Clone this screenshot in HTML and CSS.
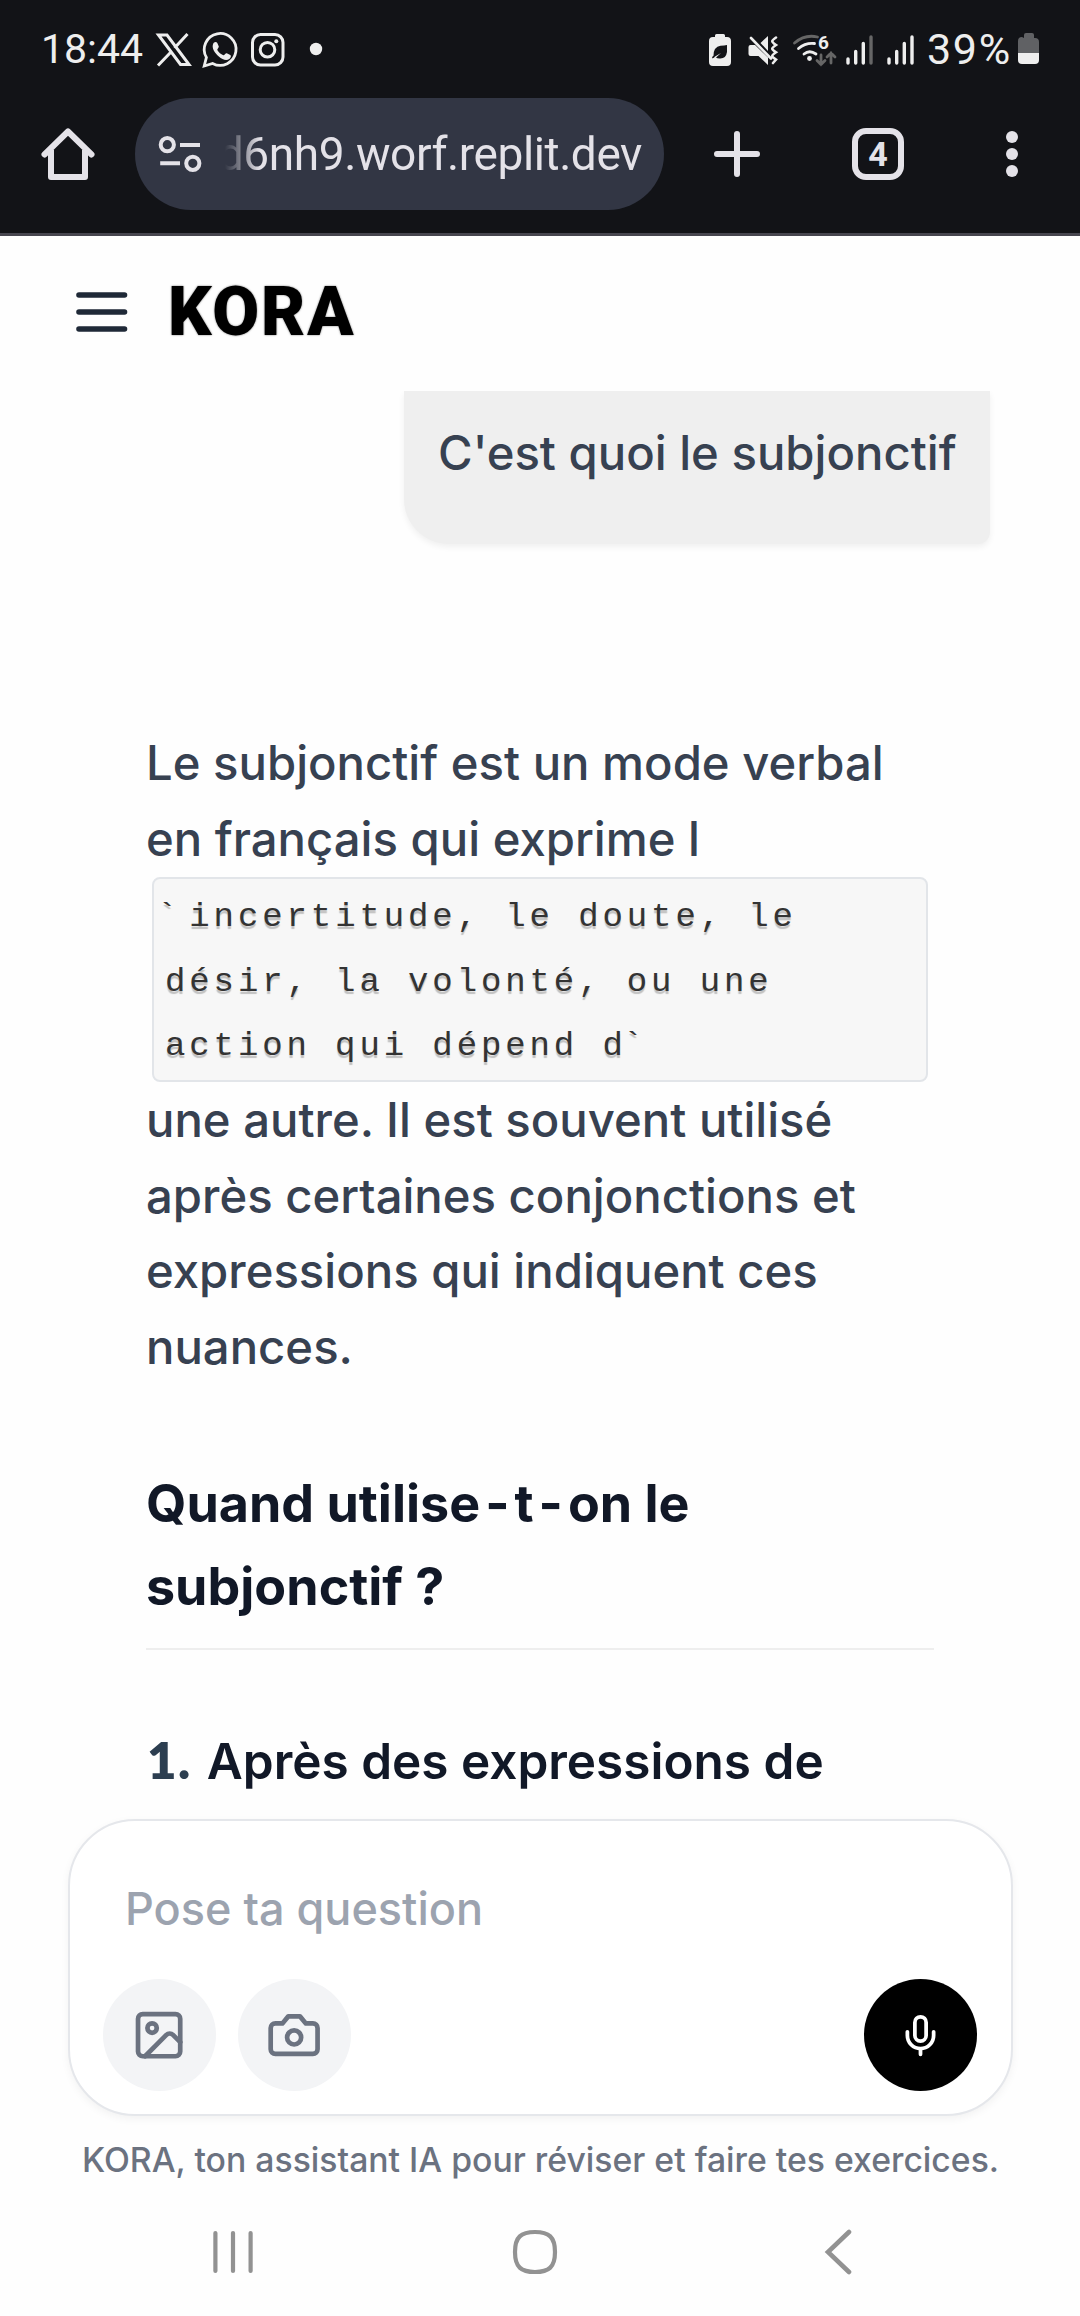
FILE: index.html
```html
<!DOCTYPE html>
<html lang="fr">
<head>
<meta charset="utf-8">
<title>KORA</title>
<link rel="stylesheet" href="styles.css">
</head>
<body>
<div class="chrome">
  <div class="status">
    <span class="clock">18:44</span>
    <svg class="st-apps" width="172" height="40" viewBox="154 29 172 40" fill="none" stroke="#eee">
      <path d="M158.500 35h8.500l22 29.500h-8.500zM187.500 34l-13 14M171 52l-13 13.500" stroke-width="3"/>
      <path d="M204.200 66l2.200-8.600a15.900 15.900 0 1 1 6.200 6z" stroke-width="2.800"/>
      <path d="M213.500 43c1.500-1.500 3-1.500 3.800 0l1.500 3.500c.3 1-1.800 2.500-1.500 3.500 1.500 2.500 3.500 4.300 6 5.200 1.200.2 2.200-2.400 3.500-2l3.500 1.800c1.200.8.500 3-1 4-3 2-7 .5-10.500-2.500-3.500-3-8-8.500-5.300-13.500z" fill="#eee" stroke="none"/>
      <rect x="252.500" y="34.500" width="30.500" height="30.500" rx="8" stroke-width="3"/>
      <circle cx="267.500" cy="49.700" r="7.300" stroke-width="3"/>
      <circle cx="276.300" cy="41.300" r="2" fill="#eee" stroke="none"/>
      <circle cx="316" cy="49" r="6.200" fill="#eee" stroke="none"/>
    </svg>
    <svg class="st-sys" width="212" height="40" viewBox="706 29 212 40" fill="#eee">
      <path d="M715 37v-1.500q0-1.500 1.500-1.500h7q1.500 0 1.500 1.500V37h2q4 0 4 4v21q0 4-4 4h-14q-4 0-4-4V41q0-4 4-4z"/>
      <path d="M727 45v7q-1 7-7.500 6.500-2.500 0-3.500-1l5-4.500-6 3.500q-1 2-3 1.700 0-2 1.500-2.500 0-9 7-10 4-.2 6.500-.7z" fill="#121317"/>
      <path d="M748.500 47q0-2 2-2h4.500l13 12.500V65l-9.500-9h-8q-2 0-2-2zM760.500 43l7.500-7v15z"/>
      <path d="M751 38l20 20.500M776 37.500c-5 3.500-5 4 0 7.500-5 3.500-5 4 0 7.300-5 3.500-5 4 0 7.300l-3 3.400" fill="none" stroke="#eee" stroke-width="2.600" stroke-linecap="round"/>
      <g fill="none" stroke-width="2.800" stroke-linecap="round">
        <path d="M794.500 43q10.500-9 23-6" stroke="#666"/>
        <path d="M798.500 48.500q7-6 16-5M804 54q5.500-4.500 12 0" stroke="#eee"/>
        <path d="M821 55v9.500m-4-4 4 4 4-4M831 63V53m-4 4 4-4 4 4" stroke="#666"/>
      </g>
      <circle cx="809.500" cy="58.500" r="2.400"/>
      <text x="818" y="48.500" class="wifi-gen">6</text>
      <g stroke="#eee" stroke-width="3.400" stroke-linecap="round">
        <path d="M848 59v4M855.700 51.500V63M863.300 43.500V63M889 59v4M896.700 51.500V63M904.300 43.500V63M912 37v26"/>
        <path d="M871 37v26" stroke="#666"/>
      </g>
    </svg>
    <span class="battery-level">39%</span>
    <svg class="st-batt" width="22" height="32" viewBox="0 0 22 32">
      <path d="M6 5V2q0-2 2-2h6q2 0 2 2v3h1q4 0 4 4v12H0V8q0-4 4-4z" fill="#606164"/>
      <path d="M0 20h21v7q0 4-4 4H4q-4 0-4-4z" fill="#eee"/>
    </svg>
  </div>
  <div class="toolbar">
    <svg class="home" width="56" height="56" viewBox="40 126 56 56" fill="none" stroke="#e4e2e8" stroke-width="6" stroke-linejoin="round">
      <path d="M44.500 154.500L68 131.500l23.500 23" stroke-linecap="round"/><path d="M51 150v27h34v-27"/>
    </svg>
    <div class="omnibox">
      <svg width="44" height="38" viewBox="158 135 44 38" fill="none" stroke="#e4e2e8" stroke-width="4">
        <circle cx="167.300" cy="144.700" r="6.600"/><path d="M180 145h20M160.200 163.200H180"/><circle cx="192.800" cy="163.300" r="6.600"/>
      </svg>
      <span class="url">d6nh9.worf.replit.dev</span>
    </div>
    <svg class="plus" width="48" height="48" viewBox="0 0 48 48" stroke="#e4e2e8" stroke-width="6" stroke-linecap="round"><path d="M24 4v40M4 24h40"/></svg>
    <div class="tabs">4</div>
    <svg class="more" width="14" height="48" viewBox="0 0 14 48" fill="#e4e2e8"><circle cx="7" cy="7" r="6"/><circle cx="7" cy="24" r="6"/><circle cx="7" cy="41" r="6"/></svg>
  </div>
</div>

<header class="app-header">
  <svg width="52" height="42" viewBox="0 0 52 42" stroke="#1f2937" stroke-width="5.600" stroke-linecap="round"><path d="M3 4h45.500M3 21h45.500M3 38h45.500"/></svg>
  <h1 class="brand">KORA</h1>
</header>

<main class="chat">
  <div class="bubble">C'est quoi le subjonctif</div>
  <article class="answer">
    <p class="text">Le subjonctif est un mode verbal<br>en français qui exprime l</p>
    <code class="snippet"><span class="tick">`</span>incertitude, le doute, le<br>désir, la volonté, ou une<br>action qui dépend d<span class="tick">`</span></code>
    <p class="text">une autre. Il est souvent utilisé<br>après certaines conjonctions et<br>expressions qui indiquent ces<br>nuances.</p>
    <h2 class="title">Quand utilise<span class="hyphen">-</span>t<span class="hyphen">-</span>on le<br>subjonctif ?</h2>
    <h3 class="subtitle"><span class="num">1.</span><span>Après des expressions de</span></h3>
  </article>
</main>

<footer class="dock">
  <div class="composer">
    <div class="placeholder">Pose ta question</div>
    <div class="actions">
      <div class="round">
        <svg width="56.250" height="56.250" viewBox="0 0 24 24" fill="none" stroke="currentColor" stroke-width="2" stroke-linecap="round" stroke-linejoin="round"><rect x="3" y="3" width="18" height="18" rx="2"/><circle cx="9" cy="9" r="2"/><path d="m21 15-3.086-3.086a2 2 0 0 0-2.828 0L6 21"/></svg>
      </div>
      <div class="round">
        <svg width="56.250" height="56.250" viewBox="0 0 24 24" fill="none" stroke="currentColor" stroke-width="2" stroke-linecap="round" stroke-linejoin="round"><path d="M14.500 4h-5L7 7H4a2 2 0 0 0-2 2v9a2 2 0 0 0 2 2h16a2 2 0 0 0 2-2V9a2 2 0 0 0-2-2h-3l-2.500-3z"/><circle cx="12" cy="13" r="3"/></svg>
      </div>
      <div class="round mic">
        <svg width="45" height="45" viewBox="0 0 24 24" fill="none" stroke="currentColor" stroke-width="2" stroke-linecap="round" stroke-linejoin="round"><path d="M12 2a3 3 0 0 0-3 3v7a3 3 0 0 0 6 0V5a3 3 0 0 0-3-3Z"/><path d="M19 10v2a7 7 0 0 1-14 0v-2M12 19v3"/></svg>
      </div>
    </div>
  </div>
  <p class="note">KORA, ton assistant IA pour réviser et faire tes exercices.</p>
</footer>

<nav class="sysnav">
  <svg width="40" height="46" viewBox="0 0 40 46" fill="none" stroke="#929292" stroke-width="4.200" stroke-linecap="round"><path d="M2.400 4v38M20 4v38M37.600 4v38"/></svg>
  <svg width="46" height="46" viewBox="0 0 46 46" fill="none" stroke="#929292" stroke-width="4.200"><path d="M23 3C37 3 43 8 43 23S37 43 23 43 3 38 3 23 9 3 23 3z"/></svg>
  <svg width="28" height="46" viewBox="0 0 28 46" fill="none" stroke="#929292" stroke-width="4.600" stroke-linecap="round"><path d="M25 3L4 23l21 20"/></svg>
</nav>
</body>
</html>
```
FILE: styles.css
```css
* { box-sizing: border-box; }
body {
  margin: 0;
  width: 1080px;
  height: 2316px;
  overflow: hidden;
  display: flex;
  flex-direction: column;
  background: #fefefe;
  font-family: Inter, "Liberation Sans", sans-serif;
  color: #374151;
}
svg { display: block; flex: none; }
h1, h2, h3, p { margin: 0; }

.chrome {
  height: 236px;
  flex: none;
  background: #121317;
  border-bottom: 3px solid #47464f;
  font-family: Roboto, sans-serif;
  color: #eee;
}
.status {
  height: 98px;
  padding-left: 41px;
  display: flex;
  align-items: center;
  white-space: nowrap;
}
.clock { width: 113px; font-size: 41px; line-height: 40px; }
.st-sys { margin-left: 380px; }
.battery-level { width: 91px; margin-left: 9px; font-size: 43px; line-height: 40px; letter-spacing: 1.700px; }
.wifi-gen { font: 700 19px Roboto, sans-serif; }
.toolbar {
  height: 112px;
  display: flex;
  align-items: center;
  color: #e4e2e8;
}
.home { margin-left: 40px; }
.omnibox {
  width: 529px;
  height: 112px;
  margin-left: 39px;
  padding: 0 22px 0 23px;
  border-radius: 56px;
  background: #323644;
  display: flex;
  align-items: center;
  gap: 16px;
}
.url {
  flex: 1;
  min-width: 0;
  overflow: hidden;
  display: flex;
  justify-content: flex-end;
  white-space: nowrap;
  font-size: 46px;
  line-height: 60px;
  letter-spacing: -.4px;
  -webkit-mask-image: linear-gradient(90deg, transparent 7px, #000 42px);
  mask-image: linear-gradient(90deg, transparent 7px, #000 42px);
}
.plus { margin-left: 49px; }
.tabs {
  width: 52px;
  height: 52px;
  margin-left: 91px;
  border: 6px solid #e4e2e8;
  border-radius: 14px;
  font-size: 34px;
  font-weight: 700;
  line-height: 40px;
  text-align: center;
}
.more { margin-left: 101px; }

.app-header {
  height: 155px;
  flex: none;
  padding: 0 0 3px 76px;
  display: flex;
  align-items: center;
  gap: 40px;
}
.brand {
  font: 900 68px/80px Roboto, sans-serif;
  letter-spacing: 1.800px;
  color: #000;
  text-shadow: 0 0 2px rgba(0, 0, 0, .6);
}

.chat {
  height: 1409px;
  flex: none;
  overflow: hidden;
  display: flex;
  flex-direction: column;
}
.bubble {
  align-self: flex-end;
  width: 586px;
  height: 153px;
  flex: none;
  margin-right: 90px;
  padding: 24px 34px;
  border-radius: 0 0 12px 45px;
  background: #efefef;
  box-shadow: 0 3px 6px rgba(0, 0, 0, .06);
  font-size: 47.250px;
  font-weight: 500;
  line-height: 75.600px;
  white-space: nowrap;
}
.answer {
  width: 788px;
  margin: 181px 0 0 146px;
  display: flex;
  flex-direction: column;
  white-space: nowrap;
}
.text { font-size: 47.250px; font-weight: 500; line-height: 75.600px; }
.snippet {
  height: 205px;
  margin: 1px 6px 0;
  padding: 6px 11px 0;
  border: 2px solid #e2e5e9;
  border-radius: 8px;
  background: #f7f7f7;
  color: #333;
  font-family: "Liberation Mono", monospace;
  font-size: 34px;
  line-height: 64.500px;
  letter-spacing: 3.900px;
  text-shadow: 0 3px 1px rgba(0, 0, 0, .22);
}
.tick { margin: 0 8px 0 -8px; }
.snippet .tick:last-child { margin-left: -4px; }
.title {
  margin-top: 77px;
  padding-bottom: 20px;
  border-bottom: 2px solid #eee;
  font-size: 52px;
  font-weight: 700;
  line-height: 83px;
  color: #111827;
}
.hyphen { margin: 0 5px; }
.subtitle {
  margin-top: 70px;
  display: flex;
  gap: 15px;
  align-items: baseline;
  font-size: 49.500px;
  font-weight: 600;
  line-height: 80px;
  color: #111827;
}
.num { padding-left: 1px; font: 800 51px/80px Lato, sans-serif; letter-spacing: 1.500px; color: #2c3e50; }

.dock {
  flex: none;
  height: 400px;
  padding: 19px 67px 0 68px;
}
.composer {
  height: 297px;
  padding: 71px 34px 0 33px;
  border: 2px solid #e5e7eb;
  border-radius: 67px;
  background: #fff;
  box-shadow: 0 3px 8px rgba(0, 0, 0, .05);
}
.placeholder {
  height: 87px;
  padding-left: 22px;
  font-size: 45px;
  font-weight: 500;
  line-height: 34px;
  color: #9ca3af;
}
.actions { display: flex; gap: 22px; }
.round {
  width: 113px;
  height: 112px;
  border-radius: 50%;
  background: #f3f4f6;
  color: #6b7280;
  display: flex;
  align-items: center;
  justify-content: center;
}
.mic { margin-left: auto; background: #000; color: #fff; }
.note {
  margin-top: 20px;
  font-size: 33.750px;
  font-weight: 500;
  line-height: 48px;
  text-align: center;
  white-space: nowrap;
  color: #6b7280;
}

.sysnav {
  height: 104px;
  padding: 0 228px 0 213px;
  display: grid;
  grid-template-columns: 299px 1fr auto;
  align-items: center;
}
```
